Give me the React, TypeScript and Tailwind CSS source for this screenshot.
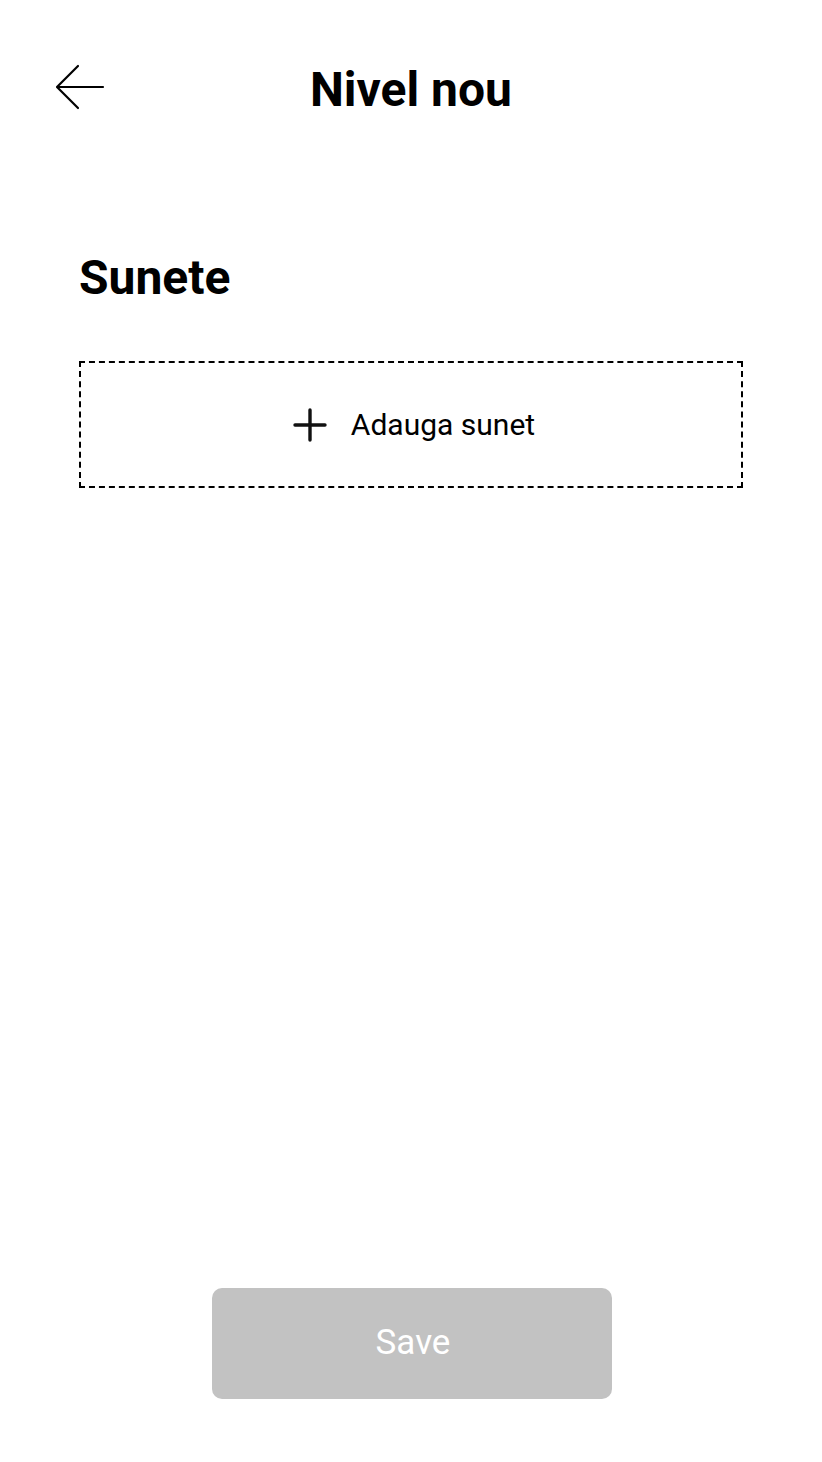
import React from 'react';

export default function App() {
  return (
    <div className="flex min-h-[1462px] flex-col bg-white text-black" style={{ fontFamily: 'Roboto, "Noto Sans", sans-serif' }}>
      <header className="grid grid-cols-[1fr_auto_1fr] items-center pt-[62px]">
        <button className="ml-[55px] -mt-[6px] flex h-[48px] w-[52px] items-center justify-start">
          <svg width="50" height="46" viewBox="0 0 50 46" fill="none" stroke="black" strokeWidth="2.2" strokeLinecap="round" strokeLinejoin="round">
            <path d="M48 23H3" />
            <path d="M23 2L2 23l21 21" />
          </svg>
        </button>
        <h1 className="text-[48px] font-bold leading-[56px]">Nivel nou</h1>
        <div />
      </header>

      <main className="flex flex-1 flex-col px-[79px] pt-[132px]">
        <h2 className="text-[48px] font-bold leading-[56px]">Sunete</h2>
        <button className="mt-[55px] flex h-[127px] w-full items-center justify-center gap-[24px] border-2 border-dashed border-black pl-[6px]">
          <svg width="34" height="34" viewBox="0 0 34 34" fill="none" stroke="#111" strokeWidth="3.4" strokeLinecap="round">
            <path d="M17 2v30M2 17h30" />
          </svg>
          <span className="text-[30px] leading-none">Adauga sunet</span>
        </button>
      </main>

      <div className="flex justify-center pb-[63px] pl-[2px]">
        <button className="flex h-[111px] w-[400px] items-center justify-center rounded-[10px] bg-[#c2c2c2] pl-[2px] text-[35px] text-white">
          Save
        </button>
      </div>
    </div>
  );
}
